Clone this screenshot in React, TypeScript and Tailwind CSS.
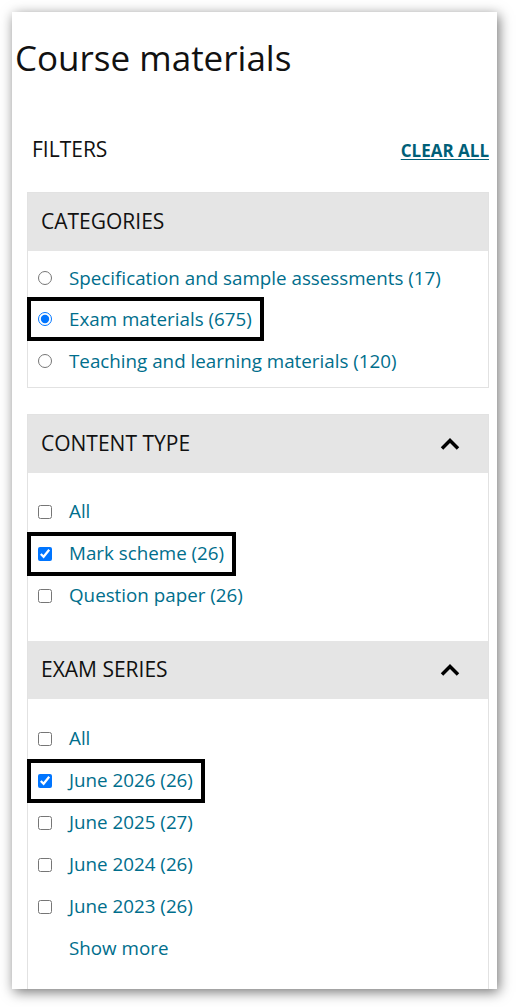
type Option = { label: string; checked?: boolean; marked?: boolean };

const CATEGORIES: Option[] = [
  { label: "Specification and sample assessments (17)" },
  { label: "Exam materials (675)", checked: true, marked: true },
  { label: "Teaching and learning materials (120)" },
];

const CONTENT_TYPES: Option[] = [
  { label: "All" },
  { label: "Mark scheme (26)", checked: true, marked: true },
  { label: "Question paper (26)" },
];

const EXAM_SERIES: Option[] = [
  { label: "All" },
  { label: "June 2026 (26)", checked: true, marked: true },
  { label: "June 2025 (27)" },
  { label: "June 2024 (26)" },
  { label: "June 2023 (26)" },
];

const font = { fontFamily: '"Open Sans", "Noto Sans", Arial, sans-serif' };

export default function App() {
  return (
    <div className="min-h-screen bg-white pl-[12px] pt-[12px]" style={font}>
      <div className="h-[977px] w-[485px] overflow-hidden bg-white shadow-[2px_3px_12px_rgba(0,0,0,0.55)]">
        <h1 className="mt-[22px] pl-[3px] text-[35px] leading-[48px] font-normal text-[#111]">
          Course materials
        </h1>

        <div className="ml-[15px] mr-[8px]">
          <div className="mt-[53px] flex h-[28px] items-baseline justify-between pl-[5px]">
            <span className="text-[21px] leading-[28px] text-[#111]">FILTERS</span>
            <a
              href="#"
              className="text-[17px] leading-[28px] font-bold text-[#005f78] underline underline-offset-2"
            >
              CLEAR ALL
            </a>
          </div>

          <section className="mt-[29px] border border-[#e2e2e2]">
            <Header title="CATEGORIES" />
            <div className="px-[3px] pt-[6px] pb-[5px]">
              {CATEGORIES.map((o) => (
                <Row key={o.label} option={o} type="radio" tight />
              ))}
            </div>
          </section>

          <section className="mt-[26px] border border-[#e2e2e2]">
            <Header title="CONTENT TYPE" collapsible />
            <div className="px-[3px] pt-[18px] pb-[24px]">
              {CONTENT_TYPES.map((o) => (
                <Row key={o.label} option={o} type="checkbox" />
              ))}
            </div>
            <Header title="EXAM SERIES" collapsible />
            <div className="px-[3px] pt-[19px] pb-[40px]">
              {EXAM_SERIES.map((o) => (
                <Row key={o.label} option={o} type="checkbox" />
              ))}
              <div className="flex h-[41px] items-center pl-[38px] text-[18.8px] text-[#006e8c]">
                Show more
              </div>
            </div>
          </section>
        </div>
      </div>
    </div>
  );
}

function Header({ title, collapsible }: { title: string; collapsible?: boolean }) {
  return (
    <div className="flex h-[58px] items-center justify-between bg-[#e5e5e5] pl-[13px] pr-[28px]">
      <span className="text-[21px] text-[#111]">{title}</span>
      {collapsible && (
        <svg width="20" height="12" viewBox="0 0 20 12" fill="none" stroke="black" strokeWidth="3.5">
          <polyline points="2,10.5 10,2.5 18,10.5" strokeLinejoin="miter" />
        </svg>
      )}
    </div>
  );
}

function Row({
  option,
  type,
  tight,
}: {
  option: Option;
  type: "radio" | "checkbox";
  tight?: boolean;
}) {
  return (
    <div className={"flex items-center " + (tight ? "h-[41.5px]" : "h-[42px]")}>
      <label
        className={
          "inline-flex h-[36px] items-center gap-[17px] pr-[8px] pl-[7px] " +
          (option.marked ? "outline-4 outline-black" : "")
        }
      >
        <input
          type={type}
          name={type === "radio" ? "category" : undefined}
          defaultChecked={option.checked}
          className="m-0 h-[14px] w-[14px]"
        />
        <span className="text-[18.8px] text-[#006e8c]">{option.label}</span>
      </label>
    </div>
  );
}
